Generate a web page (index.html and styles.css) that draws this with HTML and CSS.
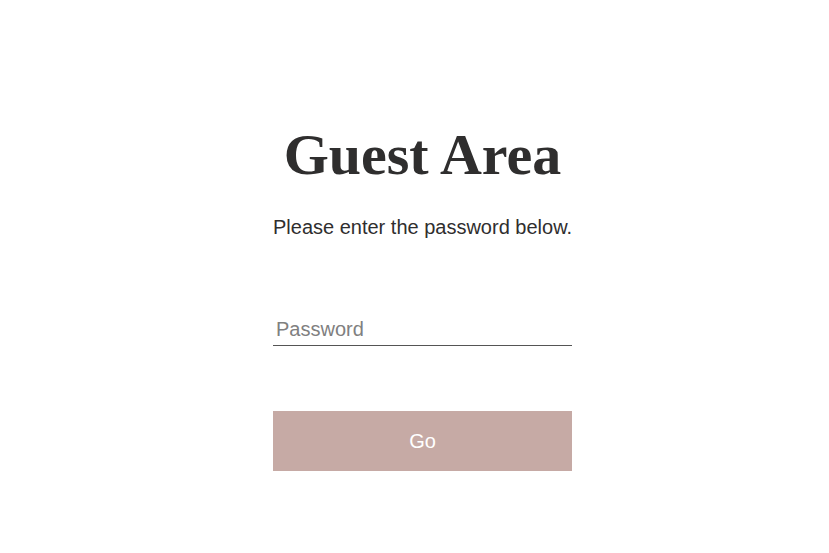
FILE: index.html
```html
<!DOCTYPE html>
<html lang="en">
<head>
  <meta charset="UTF-8" />
  <meta name="viewport" content="width=device-width, initial-scale=1.0" />
  <title>Guest Area</title>
  <link rel="stylesheet" href="styles.css">
</head>
<body>
  <div class="gate">
    <h1>Guest Area</h1>
    <p class="intro">Please enter the password below.</p>
    <form class="login">
      <input type="password" placeholder="Password">
      <button type="submit">Go</button>
    </form>
  </div>
</body>
</html>
```

FILE: styles.css
```css
body {
  margin: 0;
  background: #fff;
  font-family: 'Liberation Sans', Arial, sans-serif;
  color: #2f2e2e;
}
.gate {
  width: 299px;
  margin: 0 auto;
  padding: 117px 0 0 16px;
  display: flex;
  flex-direction: column;
  align-items: center;
}
h1 {
  margin: 0;
  font-family: 'Liberation Serif', 'Times New Roman', serif;
  font-weight: bold;
  font-size: 58px;
  line-height: 76px;
  color: #2f2e2e;
}
.intro {
  margin: 22px 0 0;
  font-size: 20px;
  line-height: 24px;
  white-space: nowrap;
}
.login {
  width: 100%;
  display: flex;
  flex-direction: column;
  margin-top: 78px;
}
.login input {
  border: none;
  border-bottom: 1px solid #555;
  padding: 1px 3px 4px;
  font-family: 'Liberation Sans', Arial, sans-serif;
  font-size: 20px;
  line-height: 23px;
  outline: none;
  color: #333;
}
.login input::placeholder {
  color: #808080;
}
.login button {
  margin-top: 65px;
  height: 60px;
  border: none;
  background: #c6aaa5;
  color: #fff;
  font-family: 'Liberation Sans', Arial, sans-serif;
  font-size: 20px;
  cursor: pointer;
}
```
